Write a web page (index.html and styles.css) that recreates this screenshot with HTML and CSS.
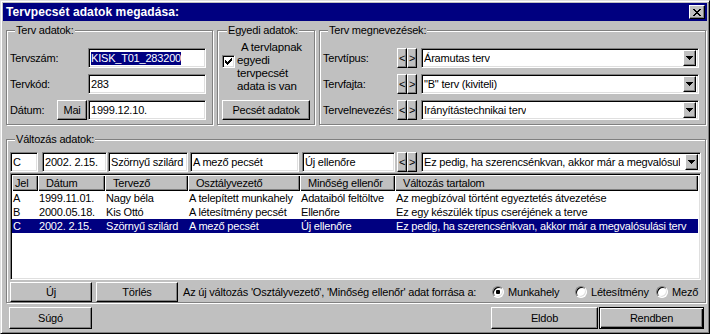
FILE: index.html
```html
<!DOCTYPE html>
<html lang="hu">
<head>
<meta charset="utf-8">
<title>Tervpecsét adatok megadása</title>
<link rel="stylesheet" href="styles.css">
</head>
<body>
<div class="window">
  <div class="titlebar">
    <span class="title">Tervpecsét adatok megadása:</span>
    <span class="close raised"><svg width="8" height="7" viewBox="0 0 8 7" shape-rendering="crispEdges"><path d="M0 0h2v1h-2z M6 0h2v1h-2z M1 1h2v1h-2z M5 1h2v1h-2z M2 2h4v1h-4z M3 3h2v1h-2z M2 4h4v1h-4z M1 5h2v1h-2z M5 5h2v1h-2z M0 6h2v1h-2z M6 6h2v1h-2z" fill="#000"/></svg></span>
  </div>

  <div class="toprow">
    <div class="group g1">
      <span class="legend">Terv adatok:</span>
      <div class="rows">
        <div class="row"><span class="lbl">Tervszám:</span><span class="field f-wide"><span class="hl">KISK_T01_283200</span></span></div>
        <div class="row"><span class="lbl">Tervkód:</span><span class="field f-wide">283</span></div>
        <div class="row"><span class="lbl lbl-short">Dátum:</span><span class="btn btn-mai">Mai</span><span class="field f-wide">1999.12.10.</span></div>
      </div>
    </div>

    <div class="group g2">
      <span class="legend">Egyedi adatok:</span>
      <div class="chkrow">
        <span class="check sunken"><svg width="7" height="7" viewBox="0 0 7 7" shape-rendering="crispEdges"><path d="M6 0h1v1h-1z M5 1h2v1h-2z M0 2h1v1h-1z M4 2h3v1h-3z M0 3h2v1h-2z M3 3h3v1h-3z M0 4h5v1h-5z M1 5h3v1h-3z M2 6h1v1h-1z" fill="#000"/></svg></span>
        <span class="chktext"><span class="first">A tervlapnak</span><br>egyedi<br>tervpecsét<br>adata is van</span>
      </div>
      <span class="btn btn-pecset">Pecsét adatok</span>
    </div>

    <div class="group g3">
      <span class="legend">Terv megnevezések:</span>
      <div class="rows">
        <div class="row"><span class="lbl3">Tervtípus:</span><span class="btn nav">&lt;</span><span class="btn nav">&gt;</span><span class="combo field c-top"><span class="ctext">Áramutas terv</span><span class="drop raised"><svg width="7" height="4" viewBox="0 0 7 4" shape-rendering="crispEdges"><path d="M0 0h7v1h-7z M1 1h5v1h-5z M2 2h3v1h-3z M3 3h1v1h-1z" fill="#000"/></svg></span></span></div>
        <div class="row"><span class="lbl3">Tervfajta:</span><span class="btn nav">&lt;</span><span class="btn nav">&gt;</span><span class="combo field c-top"><span class="ctext">"B" terv (kiviteli)</span><span class="drop raised"><svg width="7" height="4" viewBox="0 0 7 4" shape-rendering="crispEdges"><path d="M0 0h7v1h-7z M1 1h5v1h-5z M2 2h3v1h-3z M3 3h1v1h-1z" fill="#000"/></svg></span></span></div>
        <div class="row"><span class="lbl3">Tervelnevezés:</span><span class="btn nav">&lt;</span><span class="btn nav">&gt;</span><span class="combo field c-top"><span class="ctext">Irányítástechnikai terv</span><span class="drop raised"><svg width="7" height="4" viewBox="0 0 7 4" shape-rendering="crispEdges"><path d="M0 0h7v1h-7z M1 1h5v1h-5z M2 2h3v1h-3z M3 3h1v1h-1z" fill="#000"/></svg></span></span></div>
      </div>
    </div>
  </div>

  <div class="group g4">
    <span class="legend">Változás adatok:</span>
    <div class="editrow">
      <span class="field e-jel">C</span>
      <span class="field e-datum">2002. 2.15.</span>
      <span class="field e-terv">Szörnyű szilárd</span>
      <span class="field e-oszt">A mező pecsét</span>
      <span class="field e-min">Új ellenőre</span>
      <span class="btn nav">&lt;</span><span class="btn nav">&gt;</span>
      <span class="combo field e-vt"><span class="ctext">Ez pedig, ha szerencsénkvan, akkor már a megvalósul</span><span class="drop raised"><svg width="7" height="4" viewBox="0 0 7 4" shape-rendering="crispEdges"><path d="M0 0h7v1h-7z M1 1h5v1h-5z M2 2h3v1h-3z M3 3h1v1h-1z" fill="#000"/></svg></span></span>
    </div>
    <div class="listbox sunken">
      <table class="list">
        <thead>
          <tr>
            <th class="c1">Jel</th>
            <th class="c2">Dátum</th>
            <th class="c3">Tervező</th>
            <th class="c4">Osztályvezető</th>
            <th class="c5">Minőség ellenőr</th>
            <th class="c6">Változás tartalom</th>
          </tr>
        </thead>
        <tbody>
          <tr><td>A</td><td>1999.11.01.</td><td>Nagy béla</td><td>A telepített munkahely</td><td>Adataiból feltöltve</td><td>Az megbízóval történt egyeztetés átvezetése</td></tr>
          <tr><td>B</td><td>2000.05.18.</td><td>Kis Ottó</td><td>A létesítmény pecsét</td><td>Ellenőre</td><td>Ez egy készülék típus cseréjének a terve</td></tr>
          <tr class="sel"><td>C</td><td>2002. 2.15.</td><td>Szörnyű szilárd</td><td>A mező pecsét</td><td>Új ellenőre</td><td>Ez pedig, ha szerencsénkvan, akkor már a megvalósulási terv</td></tr>
        </tbody>
      </table>
    </div>
    <div class="actrow">
      <span class="btn btn-act">Új</span>
      <span class="btn btn-act">Törlés</span>
      <span class="msg">Az új változás 'Osztályvezető', 'Minőség ellenőr' adat forrása a:</span>
      <span class="opt o1"><span class="radio on"></span>Munkahely</span>
      <span class="opt o2"><span class="radio"></span>Létesítmény</span>
      <span class="opt o3"><span class="radio"></span>Mező</span>
    </div>
  </div>

  <div class="bottomrow">
    <span class="btn btn-sugo">Súgó</span>
    <span class="spacer"></span>
    <span class="btn btn-eldob">Eldob</span>
    <span class="btn btn-ok">Rendben</span>
  </div>
</div>
</body>
</html>
```

FILE: styles.css
```css
* { box-sizing: border-box; }
html, body { margin: 0; padding: 0; background: #c0c0c0; }
body {
  font-family: "Liberation Sans", Arial, sans-serif;
  font-size: 11px;
  letter-spacing: -0.2px;
  color: #000;
  width: 710px;
  height: 334px;
  overflow: hidden;
}

.window {
  width: 710px;
  height: 334px;
  background: #c0c0c0;
  border: 1px solid;
  border-color: #dfdfdf #000 #000 #dfdfdf;
  box-shadow: inset 1px 1px #fff, inset -1px -1px #808080;
  padding: 2px;
  display: flex;
  flex-direction: column;
}

.titlebar {
  flex: none;
  height: 18px;
  background: #000080;
  display: flex;
  align-items: center;
  justify-content: space-between;
  padding: 0 2px 0 3px;
}
.title { color: #fff; font-weight: bold; font-size: 12px; letter-spacing: 0.1px; }

.raised {
  border: 1px solid;
  border-color: #fff #000 #000 #fff;
  box-shadow: inset -1px -1px #808080;
  background: #c0c0c0;
}
.sunken {
  border: 1px solid;
  border-color: #808080 #fff #fff #808080;
  box-shadow: inset 1px 1px #000, inset -1px -1px #dfdfdf;
  background: #fff;
}

.close {
  width: 16px;
  height: 14px;
  display: flex;
  align-items: center;
  justify-content: center;
}

/* group boxes */
.group {
  border: 1px solid #808080;
  box-shadow: inset 1px 1px #fff, 1px 1px #fff;
  display: flex;
  flex-direction: column;
  align-items: flex-start;
  flex: none;
}
.legend {
  margin: -7px 0 0 5px;
  padding: 0 1px;
  height: 13px;
  line-height: 13px;
  background: #c0c0c0;
  white-space: nowrap;
}

.toprow {
  flex: none;
  display: flex;
  gap: 4px;
  margin: 9px 0 0 3px;
  height: 95px;
}
.g1 { width: 207px; padding: 0 0 0 3px; }
.g2 { width: 98px; padding: 0 0 0 4px; }
.g3 { width: 387px; padding: 0 0 0 3px; }

.rows {
  margin-top: 11px;
  display: flex;
  flex-direction: column;
  gap: 6px;
}
.row {
  display: flex;
  align-items: center;
  height: 20px;
}
.lbl { width: 78px; }
.lbl-short { width: 47px; }
.lbl3 { width: 74px; white-space: nowrap; }

/* fields */
.field {
  height: 20px;
  border: 1px solid;
  border-color: #808080 #fff #fff #808080;
  box-shadow: inset 1px 1px #000, inset -1px -1px #dfdfdf;
  background: #fff;
  display: flex;
  align-items: center;
  padding: 0 0 0 2px;
  white-space: nowrap;
  overflow: hidden;
  flex: none;
}
.f-wide { width: 118px; }
.hl {
  background: #000080;
  color: #fff;
  line-height: 13px;
}

/* buttons */
.btn {
  border: 1px solid;
  border-color: #fff #000 #000 #fff;
  box-shadow: inset -1px -1px #808080;
  background: #c0c0c0;
  display: flex;
  align-items: center;
  justify-content: center;
  white-space: nowrap;
  flex: none;
}
.btn-mai { width: 30px; height: 20px; margin-right: 1px; }
.nav { width: 10px; height: 20px; }
.nav + .nav + .combo, .nav + .nav + .field { margin-left: 4px; }

.combo {
  justify-content: space-between;
  padding-right: 2px;
}
.ctext { overflow: hidden; white-space: nowrap; }
.c-top { width: 278px; }
.drop {
  flex: none;
  width: 13px;
  height: 16px;
  display: flex;
  align-items: center;
  justify-content: center;
}

/* egyedi */
.chkrow {
  display: flex;
  align-items: flex-start;
  margin-top: 4px;
}
.check {
  width: 13px;
  height: 13px;
  margin-top: 14px;
  margin-right: 2px;
  display: flex;
  align-items: center;
  justify-content: center;
  flex: none;
}
.chktext { line-height: 13px; font-size: 11.5px; }
.first { padding-left: 4px; }
.btn-pecset { width: 88px; height: 20px; margin-top: 7px; }

/* változás */
.g4 {
  margin: 14px 0 0 3px;
  width: 700px;
  height: 164px;
  padding: 0 0 0 3px;
}
.editrow {
  display: flex;
  align-items: center;
  margin-top: 6px;
  height: 20px;
}
.e-jel { width: 28px; margin-right: 4px; }
.e-datum { width: 65px; margin-right: 1px; }
.e-terv { width: 80px; margin-right: 2px; }
.e-oszt { width: 109px; margin-right: 3px; }
.e-min { width: 93px; margin-right: 2px; }
.e-vt { width: 280px; }

.listbox {
  margin-top: 1px;
  width: 691px;
  height: 107px;
  padding: 1px;
  overflow: hidden;
}
.list {
  border-collapse: separate;
  border-spacing: 0;
  table-layout: fixed;
  width: 686px;
}
.list th {
  height: 16px;
  padding: 0 0 0 8px;
  font-weight: normal;
  text-align: left;
  background: #c0c0c0;
  box-shadow: inset 1px 1px #fff, inset -1px -1px #000, inset -2px -2px #808080;
  white-space: nowrap;
  overflow: hidden;
}
.list th.c1 { padding-left: 3px; width: 26px; }
.list th.c2 { width: 67px; }
.list th.c3 { width: 83px; }
.list th.c4 { width: 112px; }
.list th.c5 { width: 95px; }
.list th.c6 { width: 303px; }
.list td {
  height: 14px;
  line-height: 14px;
  padding: 0 0 0 1px;
  white-space: nowrap;
  overflow: hidden;
}
.list tr.sel td { background: #000080; color: #fff; }

.actrow {
  display: flex;
  align-items: center;
  margin-top: 2px;
  height: 20px;
}
.btn-act { width: 82px; height: 20px; margin-right: 4px; }
.actrow .btn-act + .btn-act { margin-right: 5px; }
.msg { width: 309px; white-space: nowrap; }
.opt { display: flex; align-items: center; white-space: nowrap; }
.o1 { width: 83px; }
.o2 { width: 81px; }
.radio {
  width: 12px;
  height: 12px;
  border-radius: 50%;
  border: 1px solid;
  border-color: #808080 #fff #fff #808080;
  box-shadow: inset 1px 1px #000, inset -1px -1px #dfdfdf;
  background: #fff;
  margin-right: 4px;
  display: flex;
  align-items: center;
  justify-content: center;
  flex: none;
}
.radio.on::after {
  content: "";
  width: 4px;
  height: 4px;
  background: #000;
  border-radius: 1px;
}

.bottomrow {
  flex: none;
  display: flex;
  margin: 4px 3px 0 6px;
  height: 22px;
}
.spacer { flex: 1; }
.btn-sugo { width: 83px; height: 22px; }
.btn-eldob { width: 107px; height: 22px; margin-right: 1px; }
.btn-ok {
  width: 105px;
  height: 22px;
  border-color: #000;
  box-shadow: inset 1px 1px #fff, inset -1px -1px #000, inset -2px -2px #808080;
}
```
